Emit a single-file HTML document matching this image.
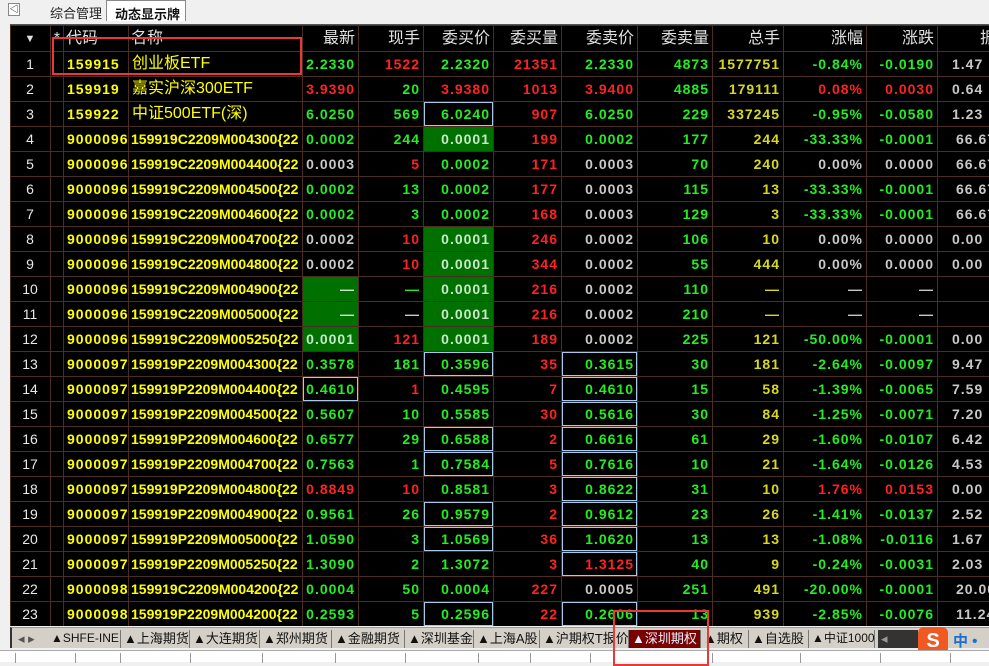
<!DOCTYPE html>
<html><head><meta charset="utf-8">
<style>
*{margin:0;padding:0;box-sizing:border-box}
body{width:989px;height:662px;overflow:hidden;background:#f0f0f0;position:relative;font-family:"Liberation Sans","Noto Sans CJK SC",sans-serif}
.top{position:absolute;left:0;top:0;width:989px;height:22px;background:#f0f0f0}
.btn{position:absolute;left:8px;top:3px;width:12px;height:13px;border:1px solid #888;background:#fff;font-size:9px;line-height:11px;text-align:center;color:#000}
.t1{position:absolute;left:50px;top:3px;font-size:13px;color:#222}
.t2{position:absolute;left:106px;top:0;width:80px;height:21px;border:1px solid #888;border-bottom:none;background:#fff;font-size:13px;font-weight:bold;color:#111;padding:3px 0 0 8px}
.grid{position:absolute;left:10px;top:24px;width:990px;height:602px;background:#000;overflow:hidden;border-top:1px solid #555}
table{border-collapse:collapse;table-layout:fixed;width:1000px}
td{height:25px;border:1px solid #4a2c20;white-space:nowrap;overflow:hidden;font-size:14px;font-weight:bold;text-align:right;padding:0 3px 0 2px;line-height:22px;letter-spacing:1px}
tr.h td{font-weight:normal;font-size:16px;color:#e0e0e0;height:26px;letter-spacing:0}
.i{text-align:center;color:#e8e8e8;font-weight:normal;font-size:14px;letter-spacing:0}
.c{text-align:left;color:#ffff00;padding-left:3px}
.n{text-align:left;color:#ffff00;font-weight:normal;font-size:16px;padding-left:3px;letter-spacing:0}
.nn{text-align:left;color:#ffff00;padding-left:2px;letter-spacing:0}
.g{color:#22ee22}.r{color:#ff2222}.y{color:#d8d820}.w{color:#c8c8c8}
.z{text-align:left;color:#c8c8c8;padding-left:14px}
.z2{text-align:left;color:#c8c8c8;padding-left:18px}
.gb{background:#007000;color:#c8e8c8}
.bx{box-shadow:inset 0 0 0 1px #a8c8e8}
.redbox{position:absolute;border:2px solid #e83838}
.tabs{position:absolute;left:10px;top:627px;width:979px;height:21px;background:#d4d0c8;border-left:2px solid #333;border-top:1px solid #999}
.tab{position:absolute;top:2px;height:18px;font-size:13px;color:#111;border-right:1px solid #777;padding-left:3px;line-height:17px;white-space:nowrap;overflow:hidden}
.tab.act{background:#7a0000;color:#e8f0ff}
.status{position:absolute;left:0;top:650px;width:989px;height:12px;background:#fff;border-top:1px solid #aaa}
.status i{position:absolute;top:2px;width:1px;height:10px;background:#999}
</style></head><body>
<div class="top"><div class="btn">◁</div><div class="t1">综合管理</div><div class="t2">动态显示牌</div></div>
<div class="grid">
<table>
<colgroup><col style="width:40px"><col style="width:13px"><col style="width:65px"><col style="width:174px"><col style="width:56px"><col style="width:65px"><col style="width:70px"><col style="width:68px"><col style="width:76px"><col style="width:75px"><col style="width:71px"><col style="width:83px"><col style="width:71px"><col style="width:73px"></colgroup>
<tr class="h"><td class="i" style="font-size:11px">▼</td><td style="padding:0;text-align:center">*</td><td style="text-align:left">代码</td><td style="text-align:left">名称</td><td>最新</td><td>现手</td><td>委买价</td><td>委买量</td><td>委卖价</td><td>委卖量</td><td>总手</td><td>涨幅</td><td>涨跌</td><td style="text-align:left;padding-left:42px">振</td></tr>
<tr><td class="i">1</td><td></td><td class="c">159915</td><td class="n">创业板ETF</td><td class="g">2.2330</td><td class="r">1522</td><td class="g">2.2320</td><td class="r">21351</td><td class="g">2.2330</td><td class="g">4873</td><td class="y">1577751</td><td class="g">-0.84%</td><td class="g">-0.0190</td><td class="z">1.47</td></tr>
<tr><td class="i">2</td><td></td><td class="c">159919</td><td class="n">嘉实沪深300ETF</td><td class="r">3.9390</td><td class="g">20</td><td class="r">3.9380</td><td class="r">1013</td><td class="r">3.9400</td><td class="g">4885</td><td class="y">179111</td><td class="r">0.08%</td><td class="r">0.0030</td><td class="z">0.64</td></tr>
<tr><td class="i">3</td><td></td><td class="c">159922</td><td class="n">中证500ETF(深)</td><td class="g">6.0250</td><td class="g">569</td><td class="g bx">6.0240</td><td class="r">907</td><td class="g">6.0250</td><td class="g">229</td><td class="y">337245</td><td class="g">-0.95%</td><td class="g">-0.0580</td><td class="z">1.23</td></tr>
<tr><td class="i">4</td><td></td><td class="c">90000961</td><td class="nn">159919C2209M004300{22</td><td class="g">0.0002</td><td class="g">244</td><td class="gb">0.0001</td><td class="r">199</td><td class="g">0.0002</td><td class="g">177</td><td class="y">244</td><td class="g">-33.33%</td><td class="g">-0.0001</td><td class="z2">66.67</td></tr>
<tr><td class="i">5</td><td></td><td class="c">90000962</td><td class="nn">159919C2209M004400{22</td><td class="w">0.0003</td><td class="r">5</td><td class="g">0.0002</td><td class="r">171</td><td class="w">0.0003</td><td class="g">70</td><td class="y">240</td><td class="w">0.00%</td><td class="w">0.0000</td><td class="z2">66.67</td></tr>
<tr><td class="i">6</td><td></td><td class="c">90000963</td><td class="nn">159919C2209M004500{22</td><td class="g">0.0002</td><td class="g">13</td><td class="g">0.0002</td><td class="r">177</td><td class="w">0.0003</td><td class="g">115</td><td class="y">13</td><td class="g">-33.33%</td><td class="g">-0.0001</td><td class="z2">66.67</td></tr>
<tr><td class="i">7</td><td></td><td class="c">90000964</td><td class="nn">159919C2209M004600{22</td><td class="g">0.0002</td><td class="g">3</td><td class="g">0.0002</td><td class="r">168</td><td class="w">0.0003</td><td class="g">129</td><td class="y">3</td><td class="g">-33.33%</td><td class="g">-0.0001</td><td class="z2">66.67</td></tr>
<tr><td class="i">8</td><td></td><td class="c">90000965</td><td class="nn">159919C2209M004700{22</td><td class="w">0.0002</td><td class="r">10</td><td class="gb">0.0001</td><td class="r">246</td><td class="w">0.0002</td><td class="g">106</td><td class="y">10</td><td class="w">0.00%</td><td class="w">0.0000</td><td class="z">0.00</td></tr>
<tr><td class="i">9</td><td></td><td class="c">90000966</td><td class="nn">159919C2209M004800{22</td><td class="w">0.0002</td><td class="r">10</td><td class="gb">0.0001</td><td class="r">344</td><td class="w">0.0002</td><td class="g">55</td><td class="y">444</td><td class="w">0.00%</td><td class="w">0.0000</td><td class="z">0.00</td></tr>
<tr><td class="i">10</td><td></td><td class="c">90000967</td><td class="nn">159919C2209M004900{22</td><td class="gb">—</td><td class="g">—</td><td class="gb">0.0001</td><td class="r">216</td><td class="w">0.0002</td><td class="g">110</td><td class="y">—</td><td class="w">—</td><td class="w">—</td><td></td></tr>
<tr><td class="i">11</td><td></td><td class="c">90000968</td><td class="nn">159919C2209M005000{22</td><td class="gb">—</td><td class="w">—</td><td class="gb">0.0001</td><td class="r">216</td><td class="w">0.0002</td><td class="g">210</td><td class="y">—</td><td class="w">—</td><td class="w">—</td><td></td></tr>
<tr><td class="i">12</td><td></td><td class="c">90000969</td><td class="nn">159919C2209M005250{22</td><td class="gb">0.0001</td><td class="r">121</td><td class="gb">0.0001</td><td class="r">189</td><td class="w">0.0002</td><td class="g">225</td><td class="y">121</td><td class="g">-50.00%</td><td class="g">-0.0001</td><td class="z">0.00</td></tr>
<tr><td class="i">13</td><td></td><td class="c">90000970</td><td class="nn">159919P2209M004300{22</td><td class="g">0.3578</td><td class="g">181</td><td class="g bx">0.3596</td><td class="r">35</td><td class="g bx">0.3615</td><td class="g">30</td><td class="y">181</td><td class="g">-2.64%</td><td class="g">-0.0097</td><td class="z">9.47</td></tr>
<tr><td class="i">14</td><td></td><td class="c">90000971</td><td class="nn">159919P2209M004400{22</td><td class="g bx">0.4610</td><td class="r">1</td><td class="g">0.4595</td><td class="r">7</td><td class="g bx">0.4610</td><td class="g">15</td><td class="y">58</td><td class="g">-1.39%</td><td class="g">-0.0065</td><td class="z">7.59</td></tr>
<tr><td class="i">15</td><td></td><td class="c">90000972</td><td class="nn">159919P2209M004500{22</td><td class="g">0.5607</td><td class="g">10</td><td class="g">0.5585</td><td class="r">30</td><td class="g bx">0.5616</td><td class="g">30</td><td class="y">84</td><td class="g">-1.25%</td><td class="g">-0.0071</td><td class="z">7.20</td></tr>
<tr><td class="i">16</td><td></td><td class="c">90000973</td><td class="nn">159919P2209M004600{22</td><td class="g">0.6577</td><td class="g">29</td><td class="g bx">0.6588</td><td class="r">2</td><td class="g bx">0.6616</td><td class="g">61</td><td class="y">29</td><td class="g">-1.60%</td><td class="g">-0.0107</td><td class="z">6.42</td></tr>
<tr><td class="i">17</td><td></td><td class="c">90000974</td><td class="nn">159919P2209M004700{22</td><td class="g">0.7563</td><td class="g">1</td><td class="g bx">0.7584</td><td class="r">5</td><td class="g bx">0.7616</td><td class="g">10</td><td class="y">21</td><td class="g">-1.64%</td><td class="g">-0.0126</td><td class="z">4.53</td></tr>
<tr><td class="i">18</td><td></td><td class="c">90000975</td><td class="nn">159919P2209M004800{22</td><td class="r">0.8849</td><td class="r">10</td><td class="g">0.8581</td><td class="r">3</td><td class="g bx">0.8622</td><td class="g">31</td><td class="y">10</td><td class="r">1.76%</td><td class="r">0.0153</td><td class="z">0.00</td></tr>
<tr><td class="i">19</td><td></td><td class="c">90000976</td><td class="nn">159919P2209M004900{22</td><td class="g">0.9561</td><td class="g">26</td><td class="g bx">0.9579</td><td class="r">2</td><td class="g bx">0.9612</td><td class="g">23</td><td class="y">26</td><td class="g">-1.41%</td><td class="g">-0.0137</td><td class="z">2.52</td></tr>
<tr><td class="i">20</td><td></td><td class="c">90000977</td><td class="nn">159919P2209M005000{22</td><td class="g">1.0590</td><td class="g">3</td><td class="g bx">1.0569</td><td class="r">36</td><td class="g bx">1.0620</td><td class="g">13</td><td class="y">13</td><td class="g">-1.08%</td><td class="g">-0.0116</td><td class="z">1.67</td></tr>
<tr><td class="i">21</td><td></td><td class="c">90000978</td><td class="nn">159919P2209M005250{22</td><td class="g">1.3090</td><td class="g">2</td><td class="g">1.3072</td><td class="r">3</td><td class="r bx">1.3125</td><td class="g">40</td><td class="y">9</td><td class="g">-0.24%</td><td class="g">-0.0031</td><td class="z">2.03</td></tr>
<tr><td class="i">22</td><td></td><td class="c">90000985</td><td class="nn">159919C2209M004200{22</td><td class="g">0.0004</td><td class="g">50</td><td class="g">0.0004</td><td class="r">227</td><td class="w">0.0005</td><td class="g">251</td><td class="y">491</td><td class="g">-20.00%</td><td class="g">-0.0001</td><td class="z2">20.00</td></tr>
<tr><td class="i">23</td><td></td><td class="c">90000986</td><td class="nn">159919P2209M004200{22</td><td class="g">0.2593</td><td class="g">5</td><td class="g bx">0.2596</td><td class="r">22</td><td class="g bx">0.2606</td><td class="g">13</td><td class="y">939</td><td class="g">-2.85%</td><td class="g">-0.0076</td><td class="z2">11.24</td></tr>
</table>
</div>
<div class="tabs">
<div class="tab" style="left:3px;width:30px;border:none;color:#555">◂ ▸</div>
<div class="tab" style="left:36px;width:73px;font-size:12px">▲SHFE-INE</div>
<div class="tab" style="left:109px;width:69px">▲上海期货</div>
<div class="tab" style="left:178px;width:70px">▲大连期货</div>
<div class="tab" style="left:248px;width:72px">▲郑州期货</div>
<div class="tab" style="left:320px;width:73px">▲金融期货</div>
<div class="tab" style="left:393px;width:69px">▲深圳基金</div>
<div class="tab" style="left:462px;width:66px">▲上海A股</div>
<div class="tab" style="left:528px;width:89px">▲沪期权T报价</div>
<div class="tab act" style="left:617px;width:72px">▲深圳期权</div>
<div class="tab" style="left:689px;width:48px">▲期权</div>
<div class="tab" style="left:737px;width:60px">▲自选股</div>
<div class="tab" style="left:797px;width:66px;font-size:12px">▲中证1000</div>
<div class="tab" style="left:866px;width:40px;background:#333;border:none;color:#999">◂</div>
</div>
<div style="position:absolute;left:918px;top:627px;width:30px;height:28px;background:#f05a22;border-radius:6px;color:#fff;font-weight:bold;font-size:20px;text-align:center;line-height:28px">S</div>
<div style="position:absolute;left:953px;top:630px;color:#1a6fd0;font-size:15px;font-weight:bold">中 •</div>
<div class="status"><i style="left:15px"></i><i style="left:75px"></i><i style="left:120px"></i><i style="left:190px"></i><i style="left:262px"></i><i style="left:335px"></i><i style="left:405px"></i><i style="left:478px"></i><i style="left:530px"></i><i style="left:590px"></i><i style="left:712px"></i><i style="left:800px"></i><i style="left:880px"></i><i style="left:950px"></i></div>
<div class="redbox" style="left:52px;top:37px;width:250px;height:38px"></div>
<div class="redbox" style="left:613px;top:610px;width:96px;height:56px"></div>
</body></html>
